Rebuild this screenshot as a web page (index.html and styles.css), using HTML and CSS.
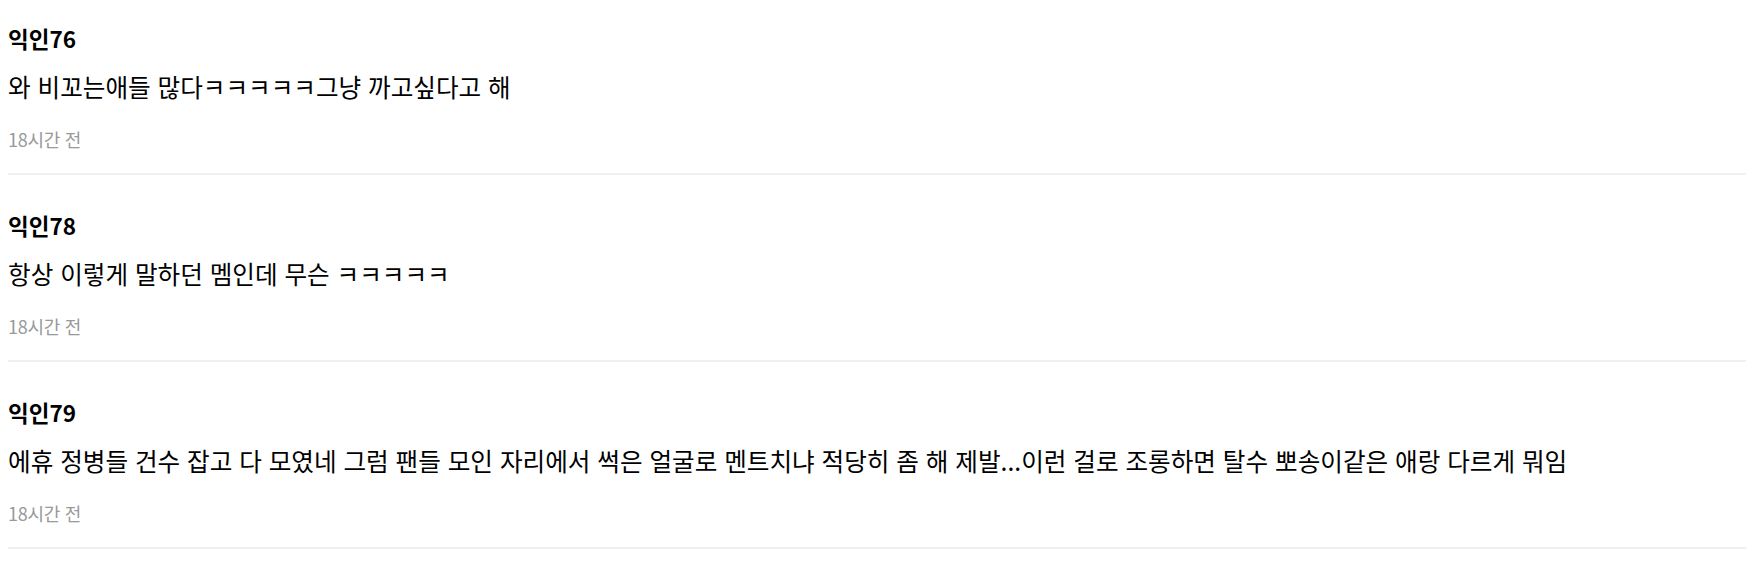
FILE: index.html
```html
<!DOCTYPE html>
<html lang="ko">
<head>
<meta charset="utf-8">
<title>댓글</title>
<link rel="stylesheet" href="styles.css">
</head>
<body>
<ul class="comments">
  <li class="comment">
    <div class="comment-name">익인76</div>
    <p class="comment-text">와 비꼬는애들 많다ㅋㅋㅋㅋㅋ그냥 까고싶다고 해</p>
    <div class="comment-time">18시간 전</div>
  </li>
  <li class="comment">
    <div class="comment-name">익인78</div>
    <p class="comment-text">항상 이렇게 말하던 멤인데 무슨 ㅋㅋㅋㅋㅋ</p>
    <div class="comment-time">18시간 전</div>
  </li>
  <li class="comment">
    <div class="comment-name">익인79</div>
    <p class="comment-text">에휴 정병들 건수 잡고 다 모였네 그럼 팬들 모인 자리에서 썩은 얼굴로 멘트치냐 적당히 좀 해 제발...이런 걸로 조롱하면 탈수 뽀송이같은 애랑 다르게 뭐임</p>
    <div class="comment-time">18시간 전</div>
  </li>
</ul>
</body>
</html>
```
FILE: styles.css
```css
html, body {
  margin: 0;
  padding: 0;
  background: #ffffff;
}

body {
  font-family: "Noto Sans CJK KR", "Noto Sans", sans-serif;
  color: #000000;
}

.comments {
  list-style: none;
  margin: 0;
  padding: 0 0 0 8px;
}

.comment {
  display: flex;
  flex-direction: column;
  padding: 35px 0 22px 0;
  border-bottom: 2px solid #f0f0f0;
}

.comment:first-child {
  padding-top: 23px;
}

.comment-name {
  font-size: 22.5px;
  font-weight: 700;
  line-height: 30px;
}

.comment-text {
  margin: 16px 0 0 0;
  font-size: 24.6px;
  line-height: 34px;
  white-space: nowrap;
}

.comment-time {
  margin-top: 24px;
  font-size: 18px;
  line-height: 24px;
  color: #999999;
  letter-spacing: -0.3px;
}
```
